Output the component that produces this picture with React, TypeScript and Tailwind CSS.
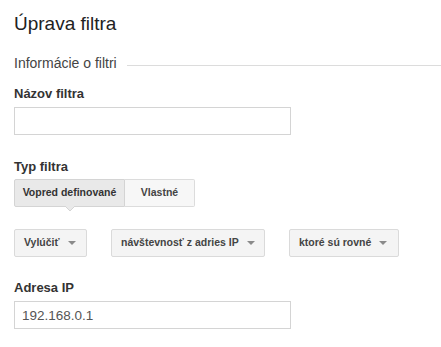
import React from "react";

const Caret: React.FC = () => (
  <svg width="8" height="4" viewBox="0 0 8 4" className="shrink-0 ml-[8px]">
    <path d="M0 0 L8 0 L4 4 Z" fill="#8a8a8a" />
  </svg>
);

const Dropdown: React.FC<{ label: string; width: string }> = ({ label, width }) => (
  <button
    className={`${width} h-[28px] flex items-center justify-between pl-[9px] pr-[13px] bg-[#f4f4f4] border border-[#dadada] rounded-[2px] text-[10.5px] font-bold text-[#444] whitespace-nowrap`}
  >
    <span>{label}</span>
    <Caret />
  </button>
);

const App: React.FC = () => {
  return (
    <div className="w-[441px] h-[347px] bg-white px-[14px] pt-[12px] font-['Liberation_Sans',Arial,sans-serif] overflow-hidden">
      <div className="text-[19px] leading-[24px] text-[#222]">Úprava filtra</div>

      <div className="mt-[19px] flex items-start">
        <span className="text-[14px] leading-[16px] text-[#444]">Informácie o filtri</span>
        <div className="flex-1 h-px bg-[#dcdcdc] mt-[10px] ml-[10px] -mr-[14px]" />
      </div>

      <div className="mt-[15px] text-[13px] leading-[16px] font-bold text-[#333]">Názov filtra</div>
      <input
        className="mt-[5px] block w-[277px] h-[28px] border border-[#d4d4d4] px-[7px] text-[13px] outline-none"
        defaultValue=""
      />

      <div className="mt-[24px] text-[13px] leading-[16px] font-bold text-[#333]">Typ filtra</div>
      <div className="mt-[4px] flex">
        <div className="relative">
          <button className="w-[111px] h-[28px] bg-[#e9e9e9] border border-[#d4d4d4] rounded-l-[2px] text-[10.5px] font-bold text-[#333] whitespace-nowrap">
            Vopred definované
          </button>
          <svg width="10" height="5" viewBox="0 0 10 5" className="absolute left-[51px] top-[27px]">
            <path d="M0 0 L5 5 L10 0" fill="#e9e9e9" stroke="#d4d4d4" strokeWidth="1" />
            <path d="M1 0 L9 0" stroke="#e9e9e9" strokeWidth="1" />
          </svg>
        </div>
        <button className="w-[70px] h-[28px] bg-[#f7f7f7] border border-l-0 border-[#dcdcdc] rounded-r-[2px] text-[10.5px] font-bold text-[#444] whitespace-nowrap">
          Vlastné
        </button>
      </div>

      <div className="mt-[22px] flex gap-[24px]">
        <Dropdown label="Vylúčiť" width="w-[73px]" />
        <Dropdown label="návštevnosť z adries IP" width="w-[154px]" />
        <Dropdown label="ktoré sú rovné" width="w-[110px]" />
      </div>

      <div className="mt-[23px] text-[13px] leading-[16px] font-bold text-[#333]">Adresa IP</div>
      <input
        className="mt-[5px] block w-[277px] h-[28px] border border-[#d4d4d4] px-[7px] text-[13.5px] text-[#555] outline-none"
        defaultValue="192.168.0.1"
      />
    </div>
  );
};

export default App;
